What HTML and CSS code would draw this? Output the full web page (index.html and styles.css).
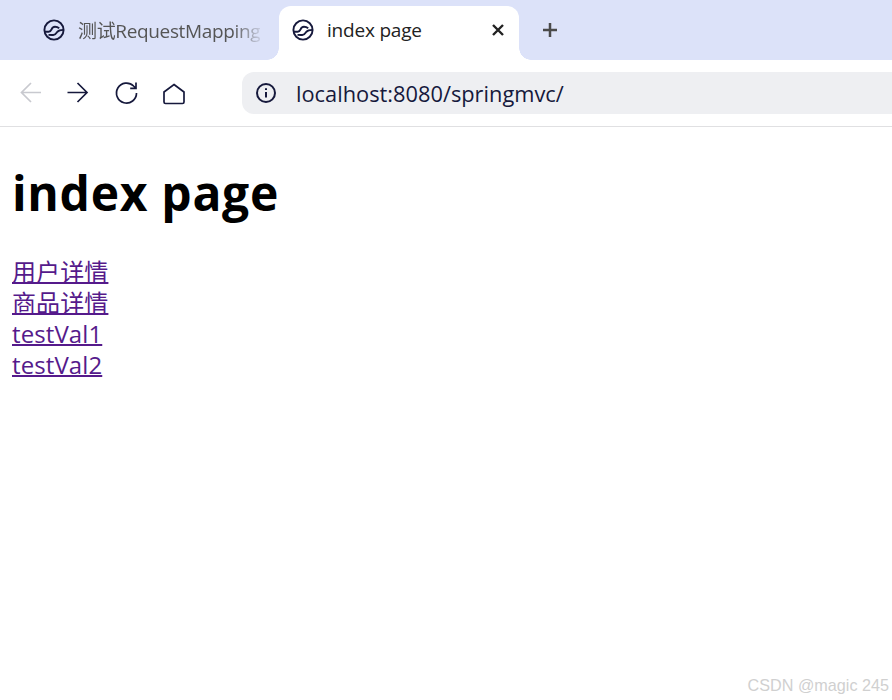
FILE: index.html
```html
<!DOCTYPE html>
<html lang="zh">
<head>
<meta charset="utf-8">
<title>index page</title>
<link rel="stylesheet" href="styles.css">
</head>
<body>
<div class="tabstrip">
  <div class="tab inactive">
    <svg class="globe" viewBox="0 0 22 22"><circle cx="11" cy="11" r="9.6"/><path d="M2 12.700h3.700c1.500 0 2.200-.8 2.700-2 .6-1.700 1.800-2.900 3.600-2.900 1.800 0 3 .5 4.200 1.500"/><path d="M20.600 10.900c-2.800 0-5 .4-6.300 1.900-1 1.500-2 3.100-4 3.200-1.700.1-3.300 0-4.800-.1"/></svg>
    <span class="tab-title">测试RequestMapping</span>
  </div>
  <div class="tab active">
    <svg class="globe" viewBox="0 0 22 22"><circle cx="11" cy="11" r="9.6"/><path d="M2 12.700h3.700c1.500 0 2.200-.8 2.700-2 .6-1.700 1.800-2.900 3.600-2.900 1.800 0 3 .5 4.200 1.500"/><path d="M20.600 10.900c-2.800 0-5 .4-6.300 1.900-1 1.500-2 3.100-4 3.200-1.700.1-3.300 0-4.800-.1"/></svg>
    <span class="tab-title">index page</span>
    <svg class="close" viewBox="0 0 12 12"><path d="M1 1l10 10M11 1L1 11"/></svg>
  </div>
  <svg class="newtab" viewBox="0 0 16 16"><path d="M8 1v14M1 8h14"/></svg>
</div>
<div class="toolbar">
  <div class="nav">
    <svg class="ic disabled" viewBox="0 0 24 24"><path d="M21 11.500H1.500M11 2L1.500 11.500 11 21"/></svg>
    <svg class="ic" viewBox="0 0 24 24"><path d="M.5 11.500H20M10.500 2L20 11.500 10.500 21"/></svg>
    <svg class="ic" viewBox="0 0 24 24"><path d="M22.500 12a10 10 0 1 1-2.900-7L22 7.300M22 1.500v5.800h-5.800"/></svg>
    <svg class="ic" viewBox="0 0 24 24"><path d="M13 3.500L23 11v10a1.500 1.500 0 0 1-1.500 1.500h-17A1.500 1.500 0 0 1 3 21V11z"/></svg>
  </div>
  <div class="address">
    <svg class="info" viewBox="0 0 20 20"><circle cx="10" cy="10" r="9"/><path d="M10 9v5.500"/><path d="M10 5.200v1.800"/></svg>
    <span class="url">localhost:8080/springmvc/</span>
  </div>
</div>
<main class="page">
  <h1 class="title">index page</h1>
  <div class="links">
    <a href="#a" class="link">用户详情</a>
    <a href="#b" class="link">商品详情</a>
    <a href="#c" class="link">testVal1</a>
    <a href="#d" class="link">testVal2</a>
  </div>
</main>
<div class="watermark">CSDN @magic 245</div>
</body>
</html>
```
FILE: styles.css
```css
html, body { margin: 0; padding: 0; height: 100%; overflow: hidden; background: #fff; }
body { position: relative; font-family: "Open Sans", "Noto Sans CJK SC", sans-serif; }
.tabstrip { height: 54px; padding: 6px 0 0 0; background: #dce2f9; display: flex; align-items: stretch; }
.tab { width: 240px; display: flex; align-items: center; box-sizing: border-box; padding-bottom: 6px; }
.tab.inactive { width: 279px; padding-left: 43px; }
.tab.active { background: #fff; border-radius: 12px 12px 0 0; padding-left: 13px; position: relative; }
.tab.active::before, .tab.active::after { content: ""; position: absolute; bottom: 0; width: 12px; height: 12px; }
.tab.active::before { left: -12px; background: radial-gradient(circle at 0 0, #dce2f9 11.500px, #fff 12px); }
.tab.active::after { right: -12px; background: radial-gradient(circle at 100% 0, #dce2f9 11.500px, #fff 12px); }
.globe { width: 22px; height: 22px; fill: none; stroke: #16193c; stroke-width: 1.900; flex: none; }
.tab-title { font-size: 19px; margin-left: 13px; white-space: nowrap; letter-spacing: -0.200px; }
.inactive .tab-title { color: #555; letter-spacing: -0.350px; -webkit-mask-image: linear-gradient(90deg, #000 85%, transparent 100%); mask-image: linear-gradient(90deg, #000 85%, rgba(0,0,0,.15) 100%); }
.active .tab-title { color: #222; flex: 1; }
.close { width: 12px; height: 12px; fill: none; stroke: #222; stroke-width: 2.400; margin-right: 15px; flex: none; }
.newtab { width: 16px; height: 16px; fill: none; stroke: #4a4a4a; stroke-width: 2.500; margin: 16px 0 0 23px; flex: none; }
.toolbar { height: 67px; box-sizing: border-box; background: #fff; border-radius: 12px 0 0 0; border-bottom: 1px solid #e0e0e2; display: flex; align-items: center; padding: 0 0 0 20px; position: relative; }
.nav { display: flex; gap: 23px; flex: none; }
.ic { width: 24px; height: 24px; fill: none; stroke: #16193c; stroke-width: 1.700; flex: none; overflow: visible; }
.ic.disabled { stroke: #c8c9cf; }
.address { margin-left: 57px; flex: 1; height: 42px; background: #eeeff2; border-radius: 12px 0 0 12px; display: flex; align-items: center; padding-left: 14px; }
.info { width: 20px; height: 20px; fill: none; stroke: #16193c; stroke-width: 2; flex: none; }
.url { margin-left: 20px; font-size: 21.800px; color: #16193c; white-space: nowrap; }
.page { padding: 0 12px; }
.title { margin: 31px 0 0; font-size: 48px; font-weight: 700; line-height: 70px; color: #000; letter-spacing: 0.700px; }
.links { margin-top: 28px; display: flex; flex-direction: column; align-items: flex-start; }
.link { font-size: 24px; line-height: 31px; color: #551a8b; text-decoration: underline; text-decoration-thickness: 2px; letter-spacing: 0.100px; }
.watermark { position: absolute; right: 3px; bottom: 5px; font-family: "Liberation Sans", sans-serif; font-size: 16.200px; color: #d0d0d0; }
```
